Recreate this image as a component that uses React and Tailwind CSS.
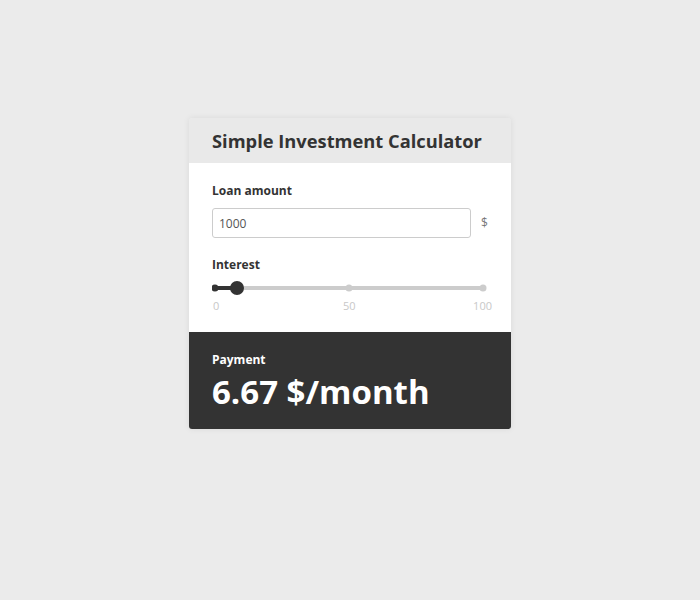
const App = () => {
  return (
    <div className="min-h-[600px] w-full bg-[#ebebeb] flex justify-center pt-[118px] font-['Open_Sans',sans-serif]">
      <div className="w-[322px] h-[311px] flex flex-col rounded-[3px] overflow-hidden shadow-[0_0_6px_rgba(0,0,0,0.08)]">
        {/* Header */}
        <div className="h-[45px] bg-[#e9e9e9] px-[23px] flex items-center">
          <h1 className="text-[18.3px] font-bold text-[#333] whitespace-nowrap">Simple Investment Calculator</h1>
        </div>

        {/* Body */}
        <div className="bg-white px-[23px] pt-[19px] h-[169px] flex flex-col">
          <label className="text-[12px] font-bold text-[#333] leading-[18px]">Loan amount</label>
          <div className="flex items-center gap-[10px] mt-[8px]">
            <input
              defaultValue="1000"
              className="w-[259px] h-[30px] border border-[#ccc] rounded-[3px] px-[6px] text-[12px] text-[#555] outline-none"
            />
            <span className="text-[12px] text-[#777]">$</span>
          </div>

          <label className="mt-[18px] text-[12px] font-bold text-[#333] leading-[18px]">Interest</label>
          <svg width="276" height="14" viewBox="0 0 276 14" className="mt-[7px]">
            <line x1="3" y1="7" x2="271" y2="7" stroke="#ccc" strokeWidth="4" strokeLinecap="round" />
            <line x1="3" y1="7" x2="25" y2="7" stroke="#333" strokeWidth="4" />
            <circle cx="3" cy="7" r="3.5" fill="#333" />
            <circle cx="137" cy="7" r="3.5" fill="#ccc" />
            <circle cx="271" cy="7" r="3.5" fill="#ccc" />
            <circle cx="25" cy="7" r="7" fill="#333" />
          </svg>
          <div className="flex justify-between w-[280px] pl-[1px] mt-[3px] text-[11px] leading-[16px] text-[#c8c8c8]">
            <span>0</span>
            <span className="translate-x-[3px]">50</span>
            <span>100</span>
          </div>
        </div>

        {/* Result */}
        <div className="flex-1 bg-[#333] px-[23px] pt-[19px]">
          <div className="text-[12px] font-bold text-white leading-[18px]">Payment</div>
          <div className="text-[33px] font-bold text-white leading-[40px] mt-[3px]">6.67 $/month</div>
        </div>
      </div>
    </div>
  );
};

export default App;
